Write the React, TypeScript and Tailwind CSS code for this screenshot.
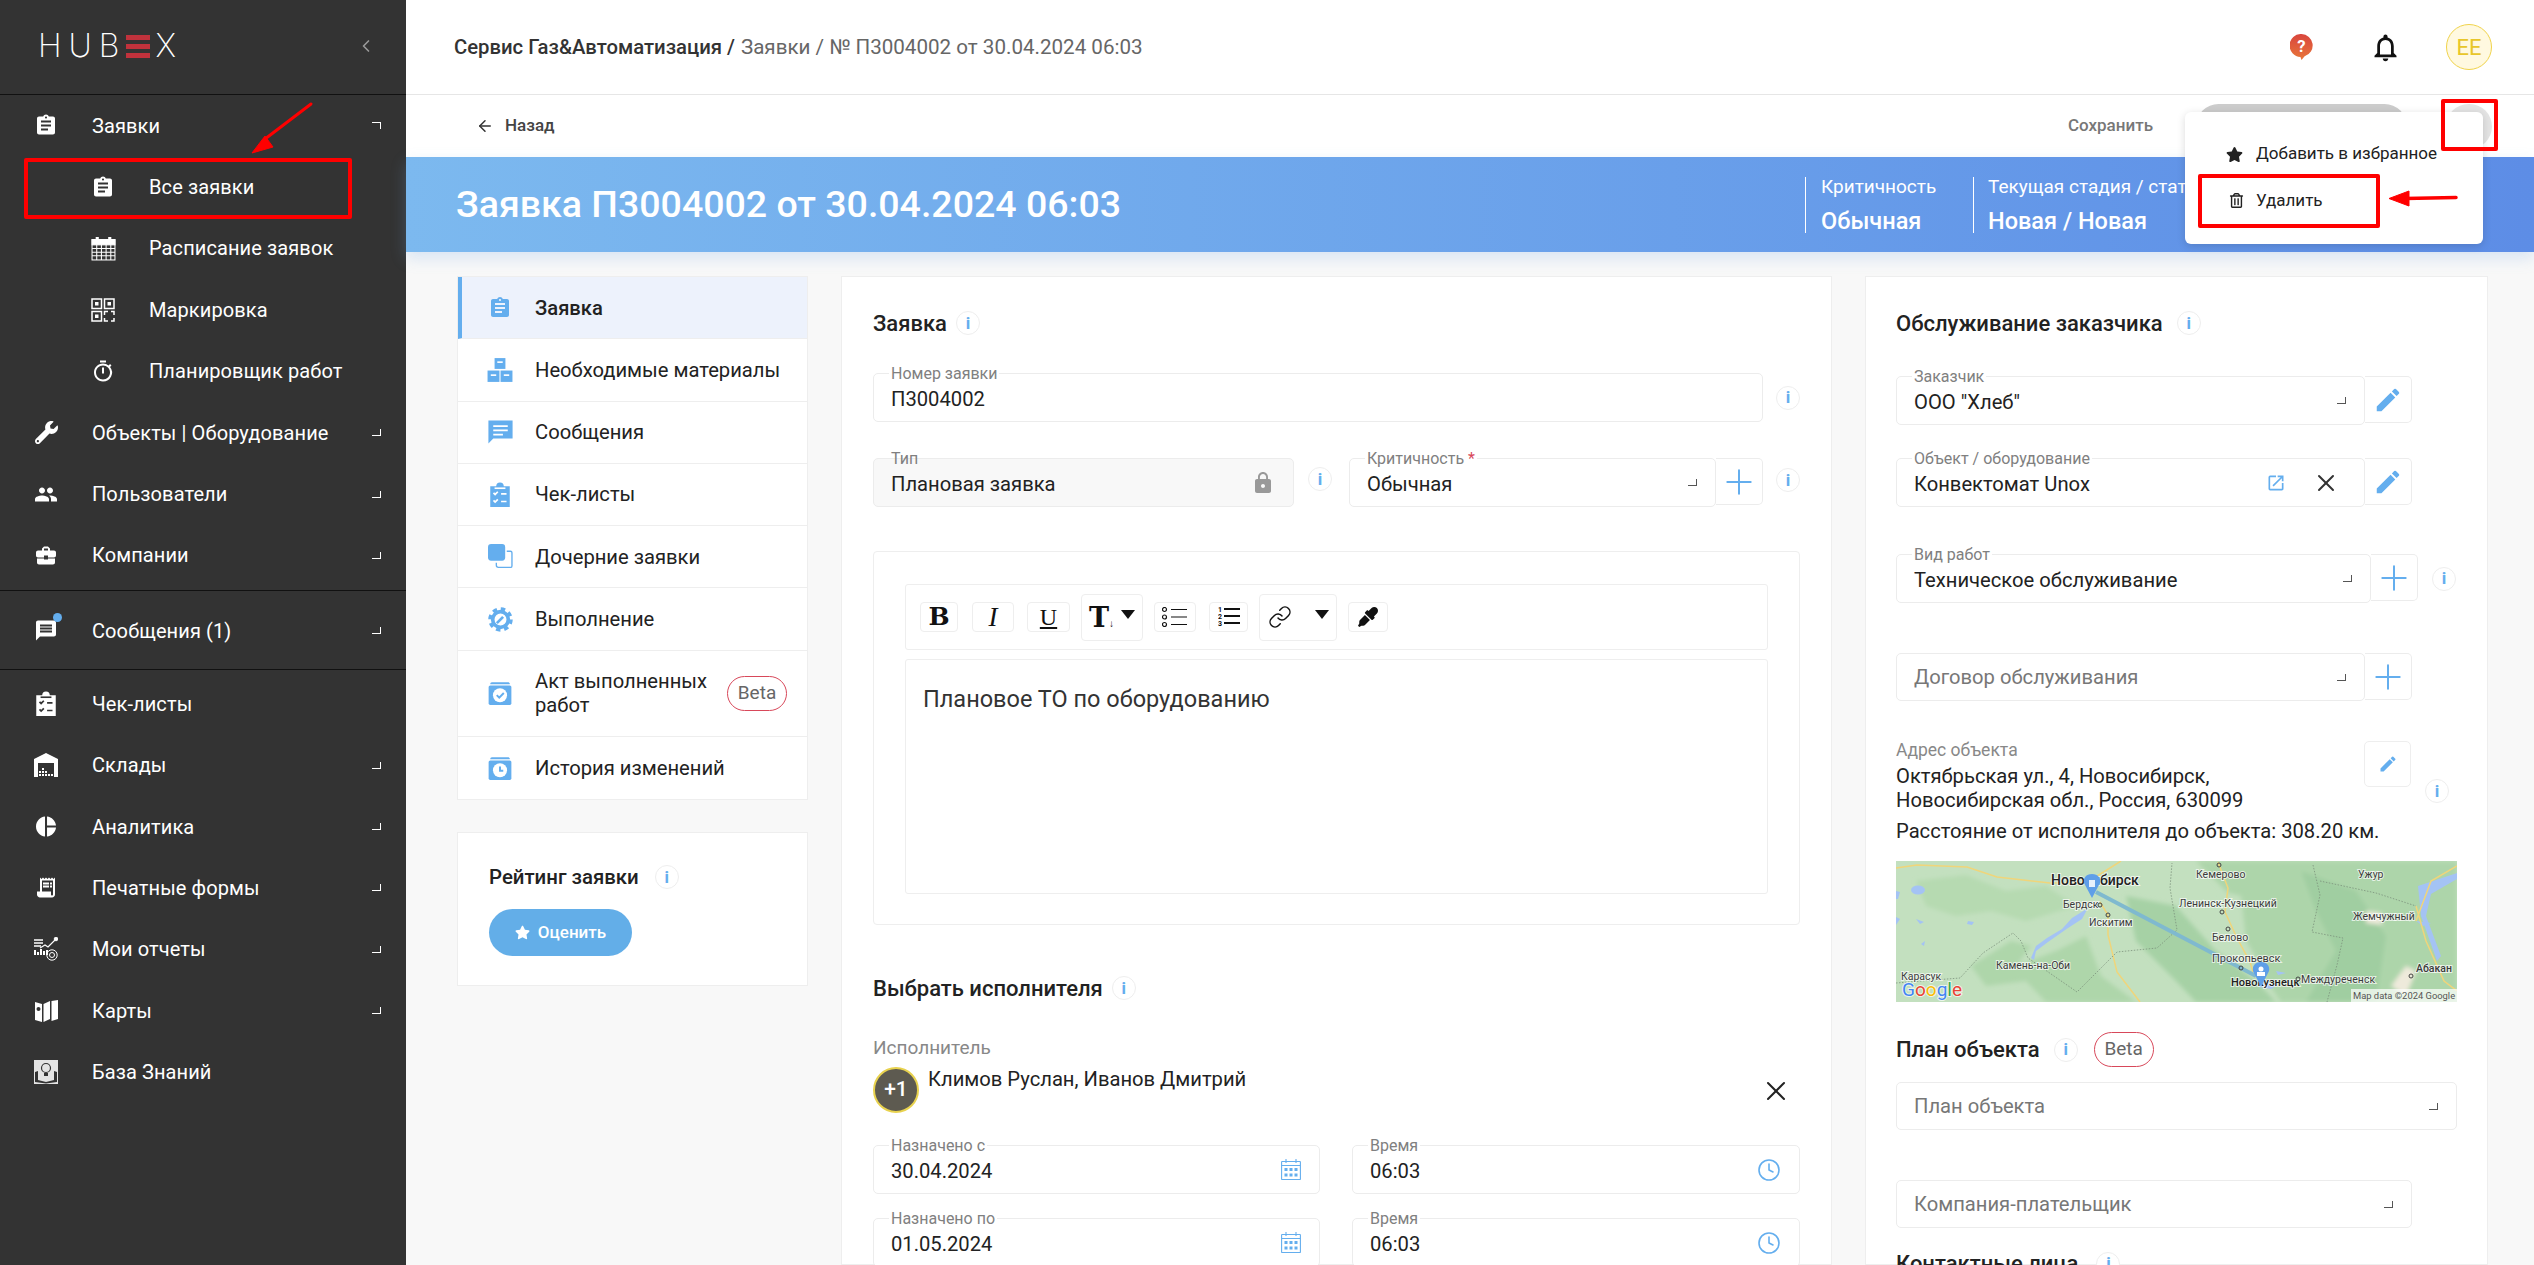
import React from 'react';
import { ArrowLeft, ChevronLeft, Clock, Link as LinkIcon, Plus, X } from 'lucide-react';
import { FaRegTrashAlt, FaStar, FaWrench, FaEyeDropper } from 'react-icons/fa';
import {
    MdAssignment, MdBusinessCenter, MdEdit, MdLock, MdMessage, MdNotificationsNone,
    MdOpenInNew, MdOutlineTimer, MdPeople, MdPieChart, MdReceiptLong,
} from 'react-icons/md';

const Corner = ({ up = false, className = '' }: { up?: boolean; className?: string }) => (
    <span className={`block h-[7px] w-[9px] border-r border-current ${up ? 'border-t' : 'border-b'} ${className}`} />
);

const Info = ({ className = '' }: { className?: string }) => (
    <span className={`flex h-6 w-6 shrink-0 items-center justify-center rounded-full border border-[#eeeeee] bg-white text-[17px] font-bold leading-none text-[#64aeee] ${className}`}>i</span>
);

const Beta = ({ className = '' }: { className?: string }) => (
    <span className={`flex h-[35px] w-[60px] shrink-0 items-center justify-center rounded-full border border-[#d8485a] text-[19px] text-[#666666] ${className}`}>Beta</span>
);

// icons that no package has in this shape
const Clipboard = ({ size = 26, inner = '#333333' }: { size?: number; inner?: string }) => (
    <svg viewBox="0 0 24 24" width={size} height={size} fill="currentColor" className="shrink-0">
        <path d="M3 4h5.5a3.5 3.5 0 0 1 7 0H21v19H3z" />
        <g stroke={inner} strokeWidth="1.6" fill="none">
            <path d="M6 10l1.5 1.5L10 9M6 17l1.5 1.5L10 16M13 11h5M13 18h5" />
        </g>
        <rect x="7" y="5" width="10" height="1.5" fill={inner} />
    </svg>
);

const BoxCalendar = ({ clock = false }: { clock?: boolean }) => (
    <svg viewBox="0 0 24 24" width={26} height={26} className="shrink-0 text-[#64aeee]" fill="currentColor">
        <path d="M3 3.5A1.5 1.5 0 0 1 4.500 2H20l1 1v1H3z" />
        <rect x="1.500" y="5" width="21" height="18" rx="1.500" />
        <circle cx="12" cy="14" r="6.500" fill="#ffffff" />
        {clock
            ? <path d="M12 10.500V14.500H15" stroke="currentColor" strokeWidth="1.800" fill="none" />
            : <path d="M9 14l2.300 2.300L15.500 12" stroke="currentColor" strokeWidth="1.800" fill="none" />}
    </svg>
);

const Boxes = () => (
    <svg viewBox="0 0 24 24" width={26} height={26} className="shrink-0 text-[#64aeee]" fill="currentColor">
        <rect x="7" y="1" width="10" height="10" />
        <rect x="0.500" y="12.500" width="11" height="10.500" />
        <rect x="12.500" y="12.500" width="11" height="10.500" />
        <g fill="#ffffff"><rect x="9.500" y="4" width="5" height="1.500" /><rect x="3.500" y="16" width="5" height="1.500" /><rect x="15.500" y="16" width="5" height="1.500" /></g>
    </svg>
);

const ChildDocs = () => (
    <svg viewBox="0 0 24 24" width={25} height={25} className="shrink-0 text-[#64aeee]" fill="currentColor">
        <rect x="0" y="0" width="16.500" height="16" rx="3" />
        <path d="M18 7h3.500a1.500 1.500 0 0 1 1.500 1.500V21a1.500 1.500 0 0 1-1.500 1.500H10a2 2 0 0 1-2-2V18" fill="none" stroke="currentColor" strokeWidth="1.300" />
    </svg>
);

const GearWrench = () => (
    <svg viewBox="0 0 24 24" width={25} height={25} className="shrink-0 text-[#64aeee]" fill="none" stroke="currentColor">
        <circle cx="12" cy="12" r="10" strokeWidth="3.500" strokeDasharray="4.200 3.650" />
        <circle cx="12" cy="12" r="7.500" strokeWidth="3.500" />
        <path d="M8.500 15.500L14.500 9.500" strokeWidth="2.600" />
    </svg>
);

const Bubble = () => (
    <svg viewBox="0 0 24 24" width={29} height={29} className="shrink-0 text-[#64aeee]" fill="currentColor">
        <path d="M2 2h20v15H6l-4 4z" />
        <path d="M6 6h12v1.500H6zM6 9.500h12V11H6zM6 13h8v1.500H6z" fill="#ffffff" />
    </svg>
);

const GridCalendar = () => (
    <svg viewBox="0 0 24 24" width={25} height={25} fill="none" stroke="currentColor" strokeWidth="1" className="shrink-0">
        <rect x="1" y="3.500" width="22" height="19.500" fill="none" />
        <rect x="1" y="3.500" width="22" height="5" fill="currentColor" />
        <path d="M6 1v5M18 1v5" strokeWidth="3" />
        <path d="M1 12h22M1 15.500h22M1 19h22M5.500 8v15M10 8v15M14.500 8v15M19 8v15" />
    </svg>
);

const DateCalendar = () => (
    <svg viewBox="0 0 20 21" width={20} height={21} fill="none" stroke="#64aeee" strokeWidth="1.100" className="shrink-0">
        <rect x="0.600" y="2.500" width="18.800" height="18" rx="0.500" />
        <path d="M0.600 6.500h18.800M5 0v4M15 0v4" />
        <g fill="#64aeee" stroke="none">
            <rect x="3.500" y="9" width="3" height="3" /><rect x="8.500" y="9" width="3" height="3" /><rect x="13.500" y="9" width="3" height="3" />
            <rect x="3.500" y="14.500" width="3" height="3" /><rect x="8.500" y="14.500" width="3" height="3" /><rect x="13.500" y="14.500" width="3" height="3" />
        </g>
    </svg>
);

const QrIcon = () => (
    <svg viewBox="0 0 24 24" width={24} height={24} fill="none" stroke="currentColor" strokeWidth="1.500" className="shrink-0">
        <rect x="1" y="1" width="9.500" height="9.500" /><rect x="13.500" y="1" width="9.500" height="9.500" /><rect x="1" y="13.500" width="9.500" height="9.500" />
        <g fill="currentColor" stroke="none"><rect x="4" y="4" width="3.500" height="3.500" /><rect x="16.500" y="4" width="3.500" height="3.500" /><rect x="4" y="16.500" width="3.500" height="3.500" /></g>
        <path d="M13.500 17v-3.500H17M20 13.500h3V17M23 20v3h-3M17 23h-3.500v-3" />
    </svg>
);

const Warehouse = () => (
    <svg viewBox="0 0 24 24" width={24} height={24} fill="currentColor" className="shrink-0">
        <path d="M0 6L12 0l12 6v18h-4V10H4v14H0z" />
        <g><rect x="5" y="18" width="2" height="2" /><rect x="8" y="18" width="2" height="2" /><rect x="11" y="18" width="2" height="2" /><rect x="5" y="21" width="2" height="2" /><rect x="8" y="21" width="2" height="2" /><rect x="11" y="21" width="2" height="2" /><rect x="14" y="21" width="2" height="2" /><rect x="17" y="21" width="2" height="2" /><rect x="8" y="15" width="2" height="2" /></g>
    </svg>
);

const Reports = () => (
    <svg viewBox="0 0 24 24" width={24} height={24} fill="none" stroke="currentColor" className="shrink-0">
        <path d="M0 3h9M0 6h9M0 9h7" strokeWidth="1.500" />
        <path d="M1 18v-5M4 18v-3M7 18v-6M10 18v-4M13 18v-5" strokeWidth="2" />
        <path d="M6 11l5-3 3 2 7-7" strokeWidth="1.200" />
        <circle cx="22" cy="2" r="1.800" fill="currentColor" />
        <circle cx="18" cy="18" r="5.200" strokeWidth="1" />
        <circle cx="18" cy="18" r="2.500" strokeWidth="1" />
    </svg>
);

const FoldMap = () => (
    <svg viewBox="0 0 24 24" width={24} height={24} fill="currentColor" className="shrink-0">
        <path d="M1 3l7 2v18l-7-2zM9.500 5L16 2v18l-6.500 3zM17.500 2L24 1v19l-6.500 2z" />
        <circle cx="4.500" cy="10" r="2" fill="#333333" />
    </svg>
);

const BookBulb = () => (
    <svg viewBox="0 0 24 24" width={24} height={24} className="shrink-0">
        <rect width="24" height="24" fill="#e4e4e4" />
        <circle cx="12" cy="8" r="4.500" fill="none" stroke="#333333" strokeWidth="1.200" />
        <path d="M10 13h4v3h-4z" fill="#333333" />
        <path d="M1 12v10l11 1.500L23 22V12l-3-1v9l-8 2-8-2v-9z" fill="#333333" />
    </svg>
);

const HelpBubble = () => (
    <svg viewBox="0 0 22 25" width={23} height={26} className="shrink-0" fontFamily="Roboto, sans-serif">
        <defs>
            <linearGradient id="help" x1="0" y1="0" x2="0" y2="1"><stop offset="0" stopColor="#d9453d" /><stop offset="1" stopColor="#e8773a" /></linearGradient>
        </defs>
        <path d="M11 0a11 11 0 0 1 3 21.500L11 25l-1-3A11 11 0 0 1 11 0z" fill="url(#help)" />
        <text x="11" y="17" textAnchor="middle" fontSize="16" fontWeight="700" fill="#ffffff">?</text>
    </svg>
);

const Row = ({ icon, label, sub = false, open, caret = false }: { icon: React.ReactNode; label: string; sub?: boolean; open?: boolean; caret?: boolean }) => (
    <div className={`flex h-[61.4px] items-center text-white ${sub ? 'pl-[91px]' : 'pl-[34px]'} pr-[25px]`}>
        <span className="flex w-6 shrink-0 justify-center text-[29px]">{icon}</span>
        <span className="ml-[34px] flex-1 text-[20px] font-normal tracking-[0.1px]">{label}</span>
        {caret && <Corner up={open} />}
    </div>
);

const Field = ({ label, value, right, className = '', box, muted = false, req = false }: { label?: string; value: string; right?: React.ReactNode; className?: string; box?: React.ReactNode; muted?: boolean; req?: boolean }) => (
    <div className={`flex ${className}`}>
        <div className={`relative flex h-[49px] min-w-0 flex-1 items-center rounded-[5px] border border-[#ececec] pl-[17px] pr-[18px] ${muted ? 'bg-[#f8f8f8]' : 'bg-white'}`}>
            {label && (
                <span className={`absolute -top-[9px] left-[15px] px-[2px] text-[16px] leading-[18px] text-[#808080] ${muted ? '' : 'bg-white'}`}>
                    {label}{req && <span className="text-[#d8485a]"> *</span>}
                </span>
            )}
            <span className="flex-1 pt-[3px] text-[20.2px] text-[#222222]">{value}</span>
            {right}
        </div>
        {box && <span className="flex h-[47px] w-[47px] shrink-0 items-center justify-center rounded-r-[5px] border border-l-0 border-[#ececec] text-[#64aeee]">{box}</span>}
    </div>
);

const Placeholder = ({ text, box, className = '' }: { text: string; box?: React.ReactNode; className?: string }) => (
    <div className={`flex ${className}`}>
        <div className="flex h-[48px] min-w-0 flex-1 items-center rounded-[5px] border border-[#ececec] bg-white pl-[17px] pr-[18px]">
            <span className="flex-1 text-[20.2px] text-[#777777]">{text}</span>
            <Corner className="text-[#555555]" />
        </div>
        {box && <span className="flex h-[47px] w-[47px] shrink-0 items-center justify-center rounded-r-[5px] border border-l-0 border-[#ececec] text-[#64aeee]">{box}</span>}
    </div>
);

const navItems: [React.ReactNode, string][] = [
    [<MdAssignment className="text-[28px]" />, 'Заявка'],
    [<Boxes />, 'Необходимые материалы'],
    [<Bubble />, 'Сообщения'],
    [<span className="text-[#64aeee]"><Clipboard inner="#ffffff" /></span>, 'Чек-листы'],
    [<ChildDocs />, 'Дочерние заявки'],
    [<GearWrench />, 'Выполнение'],
];

const ToolBtn = ({ children, className = '' }: { children: React.ReactNode; className?: string }) => (
    <span className={`flex items-center justify-center rounded-[4px] border border-[#eeeeee] bg-white text-[#111111] ${className}`}>{children}</span>
);

const label = { paintOrder: 'stroke' } as React.CSSProperties;

const MapView = () => (
    <svg viewBox="0 0 561 141" className="block h-[141px] w-[561px]" fontFamily="Roboto, sans-serif" fontSize="10.500" fill="#3c3c3c">
        <defs>
            <filter id="soft"><feGaussianBlur stdDeviation="2" /></filter>
        </defs>
        <rect width="561" height="141" fill="#c3e0bf" />
        <g filter="url(#soft)">
            <path d="M20 20 L70 14 L110 30 L150 25 L180 45 L130 60 L95 50 L60 55 L30 45 Z" fill="#b6dab1" />
            <path d="M75 105 L115 80 L135 85 L120 105 L160 90 L190 75 L205 115 L240 141 H150 L130 120 L90 125 Z" fill="#aed6aa" />
            <path d="M230 35 L280 45 L320 90 L360 120 L380 141 H300 L280 120 L240 80 Z" fill="#a6d1a5" />
            <path d="M300 0 H561 V141 H385 L350 90 L340 40 Z" fill="#add5aa" />
            <path d="M405 10 L460 30 L490 75 L480 141 H410 L440 90 L420 50 Z" fill="#a0cea1" />
            <path d="M325 30 L345 35 L350 80 L365 105 L345 95 L330 60 Z" fill="#c3e0bf" />
            <path d="M470 50 L485 52 L486 64 L470 62 Z" fill="#eeeadb" />
            <path d="M495 125 L510 105 L520 110 L510 135 Z" fill="#eeeadb" />
        </g>
        <g fill="#a4c3f4">
            <ellipse cx="22" cy="29" rx="7" ry="4.500" />
            <path d="M135 97 L140 85 L151 77 L166 68 L176 57 L192 47 L186 58 L172 67 L152 81 L140 90 L138 99 Z" />
            <path d="M0 30 l4 1 l-2 7 l-2 0 Z M0 56 l4 2 l-4 6 Z M20 58 l8 3 l-4 2 Z M72 60 l6 1 l-2 3 l-5 -1 Z M25 83 l4 -3 l-1 5 Z" />
            <path d="M450 5 L470 0 M520 60 l15 2 l-8 3 Z" />
            <path d="M522 25 L561 12 V18 L535 33 L530 55 L545 95 L541 100 L525 55 Z" />
            <path d="M363 120 l18 4 l-6 4 l-12 -2 Z M380 110 l10 2 l-8 2 Z" />
        </g>
        <g stroke="#f0d57a" strokeWidth="1.500" fill="none">
            <path d="M0 7 L21 4 L71 6 L101 16 L154 22 L190 22 L225 0" />
            <path d="M204 41 L212 54 L212 74 L221 111 L244 141" />
            <path d="M322 1 L332 27 L329 51 L341 77 L354 101 L357 111" />
            <path d="M520 45 L530 80 L548 120 L561 130 M520 60 L535 20 L561 5" />
        </g>
        <g stroke="#7b917b" strokeWidth="0.800" strokeDasharray="1.500 1.500" fill="none">
            <path d="M0 122 L64 117 L87 92 L117 72 L125 80 L132 97 L181 131 L221 91 L261 87 L281 69 L274 27 L276 2" />
            <path d="M417 4 L424 34 L416 71 L447 77 L441 104 L431 141 M424 20 L480 32 L520 45" />
        </g>
        <path d="M200 31 L360 115" stroke="#7fb9cf" strokeWidth="4" />
        <g stroke="#ffffff" strokeWidth="2" strokeOpacity="0.7" style={label}>
            <text x="155" y="24" fontSize="14" fill="#222222" fontWeight="500">Новосибирск</text>
            <text x="167" y="47">Бердск</text>
            <text x="193" y="65">Искитим</text>
            <text x="300" y="17">Кемерово</text>
            <text x="283" y="46">Ленинск-Кузнецкий</text>
            <text x="316" y="80">Белово</text>
            <text x="316" y="101" fontSize="11">Прокопьевск</text>
            <text x="335" y="125" fontSize="11" fontWeight="500" fill="#222222">Новокузнецк</text>
            <text x="405" y="122">Междуреченск</text>
            <text x="462" y="17">Ужур</text>
            <text x="457" y="59">Жемчужный</text>
            <text x="520" y="111" fontWeight="500">Абакан</text>
            <text x="100" y="108">Камень-на-Оби</text>
            <text x="5" y="119">Карасук</text>
        </g>
        <g fill="none" stroke="#444444" strokeWidth="1">
            <circle cx="204" cy="44" r="2" /><circle cx="212" cy="54" r="2" /><circle cx="323" cy="4" r="2" /><circle cx="326" cy="51" r="2" /><circle cx="332" cy="68" r="2" /><circle cx="345" cy="107" r="2" /><circle cx="402" cy="118" r="2" /><circle cx="515" cy="115" r="2" />
        </g>
        <text x="6" y="135" fontSize="19" fontWeight="400" stroke="#ffffff" strokeWidth="2" strokeOpacity="0.7" style={label}>
            <tspan fill="#4285f4">G</tspan><tspan fill="#ea4335">o</tspan><tspan fill="#fbbc05">o</tspan><tspan fill="#4285f4">g</tspan><tspan fill="#34a853">l</tspan><tspan fill="#ea4335">e</tspan>
        </text>
        <rect x="455" y="128" width="106" height="13" fill="#ffffff" opacity="0.7" />
        <text x="457" y="138" fontSize="9.400" fill="#555555">Map data ©2024 Google</text>
        <path d="M196 13 c-6 0 -9 4 -8 9 l8 15 l8 -15 c1 -5 -2 -9 -8 -9 Z" fill="#5f9fe8" />
        <rect x="193" y="19" width="6" height="7" fill="#ffffff" opacity="0.85" />
        <path d="M365 101 c-6 0 -9 4 -8 9 l8 16 l8 -16 c1 -5 -2 -9 -8 -9 Z" fill="#5f9fe8" />
        <circle cx="365" cy="108" r="2.500" fill="#ffffff" /><rect x="361" y="111" width="8" height="4" fill="#ffffff" />
    </svg>
);

export default function App() {
    return (
        <div className="flex h-screen w-full overflow-hidden bg-[#f8f8f8] font-['Roboto',sans-serif] text-[#222222]">
            <aside className="w-[406px] shrink-0 bg-[#333333]">
                <div className="flex h-[95px] items-center border-b border-[#111111] pl-[38px] pr-[30px] pb-[2px]">
                    <span className="flex flex-1 items-center font-['Inter',sans-serif] text-[32px] font-extralight leading-none tracking-[7px] text-white">
                        HUB
                        <span className="mr-[5px] flex h-[23px] w-[24px] flex-col justify-between">
                            <span className="h-[5px] bg-[#c0323c]" />
                            <span className="h-[5px] bg-[#c0323c]" />
                            <span className="h-[5px] bg-[#c0323c]" />
                        </span>
                        X
                    </span>
                    <ChevronLeft size={20} className="text-[#999999]" />
                </div>
                <Row icon={<MdAssignment />} label="Заявки" open caret />
                <Row sub icon={<MdAssignment />} label="Все заявки" />
                <Row sub icon={<GridCalendar />} label="Расписание заявок" />
                <Row sub icon={<QrIcon />} label="Маркировка" />
                <Row sub icon={<MdOutlineTimer />} label="Планировщик работ" />
                <Row icon={<FaWrench className="text-[23px]" />} label="Объекты | Оборудование" caret />
                <Row icon={<MdPeople />} label="Пользователи" caret />
                <Row icon={<MdBusinessCenter />} label="Компании" caret />
                <div className="mt-[4px] h-[80px] border-y border-[#111111] pt-[9px]">
                    <div className="relative">
                        <Row icon={<MdMessage />} label="Сообщения (1)" caret />
                        <span className="absolute left-[53px] top-[13px] h-[9px] w-[9px] rounded-full bg-[#64aeee]" />
                    </div>
                </div>
                <div className="pt-[3px]">
                    <Row icon={<Clipboard inner="#333333" />} label="Чек-листы" />
                    <Row icon={<Warehouse />} label="Склады" caret />
                    <Row icon={<MdPieChart />} label="Аналитика" caret />
                    <Row icon={<MdReceiptLong />} label="Печатные формы" caret />
                    <Row icon={<Reports />} label="Мои отчеты" caret />
                    <Row icon={<FoldMap />} label="Карты" caret />
                    <Row icon={<BookBulb />} label="База Знаний" />
                </div>
            </aside>

            <div className="flex min-w-0 flex-1 flex-col">
                <header className="flex h-[95px] shrink-0 items-center border-b border-[#e6e6e6] bg-white pl-[48px]">
                    <span className="text-[20.3px] font-medium text-[#333333]">Сервис Газ&amp;Автоматизация /</span>
                    <span className="ml-[6px] flex-1 text-[20.6px] text-[#666666]">Заявки / № П3004002 от 30.04.2024 06:03</span>
                    <span className="mr-[56px]"><HelpBubble /></span>
                    <MdNotificationsNone className="mr-[44px] text-[33px] text-[#111111]" />
                    <span className="mr-[42px] flex h-[46px] w-[46px] items-center justify-center rounded-full border border-[#f0d34a] bg-[#fff9e0] text-[22px] text-[#e8c62a]">EE</span>
                </header>

                <div className="flex h-[62px] shrink-0 items-center bg-white pl-[70px]">
                    <ArrowLeft size={18} className="text-[#333333]" />
                    <span className="ml-[11px] flex-1 text-[17px] font-medium text-[#444444]">Назад</span>
                    <span className="mr-[43px] text-[17px] font-medium text-[#777777]">Сохранить</span>
                    <span className="mr-[39px] h-[45px] w-[211px] rounded-full bg-[#cccccc]" />
                    <span className="mr-[42px] h-[45px] w-[46px] rounded-full bg-[#e4e4e4]" />
                </div>

                <div className="flex h-[95px] shrink-0 items-center bg-gradient-to-r from-[#7cb9ef] to-[#5d8de6] pl-[50px] text-white shadow-[0_6px_14px_rgba(120,170,230,0.25)]">
                    <span className="flex-1 text-[37.500px] font-medium">Заявка П3004002 от 30.04.2024 06:03</span>
                    <div className="flex h-[56px] w-[168px] flex-col justify-between border-l border-white pl-[15px]">
                        <span className="text-[19px] leading-[20px]">Критичность</span>
                        <span className="text-[23.500px] font-medium leading-[24px]">Обычная</span>
                    </div>
                    <div className="flex h-[56px] w-[561px] flex-col justify-between border-l border-white pl-[14px]">
                        <span className="text-[19px] leading-[20px]">Текущая стадия / статус</span>
                        <span className="text-[23.500px] font-medium leading-[24px]">Новая / Новая</span>
                    </div>
                </div>

                <div className="flex min-h-0 flex-1 gap-[33px] overflow-hidden pl-[51px] pt-[24px]">
                    <div className="w-[351px] shrink-0">
                        <div className="border border-[#eeeeee] bg-white">
                            {navItems.map(([icon, text], i) => (
                                <div key={text} className={`flex h-[62.3px] items-center border-b border-[#eeeeee] text-[20.2px] ${i === 0 ? 'border-l-4 border-l-[#64aeee] bg-[#edf2fc] pl-[26px] font-medium' : 'pl-[30px]'}`}>
                                    <span className="flex w-6 shrink-0 justify-center text-[#64aeee]">{icon}</span>
                                    <span className="ml-[23px]">{text}</span>
                                </div>
                            ))}
                            <div className="flex h-[86px] items-center border-b border-[#eeeeee] pl-[29px] text-[20.2px]">
                                <BoxCalendar />
                                <span className="ml-[22px] w-[192px] leading-[24px]">Акт выполненных работ</span>
                                <Beta />
                            </div>
                            <div className="flex h-[62px] items-center pl-[29px] text-[20.2px]">
                                <BoxCalendar clock />
                                <span className="ml-[22px]">История изменений</span>
                            </div>
                        </div>
                        <div className="mt-[32px] h-[154px] border border-[#eeeeee] bg-white pl-[31px] pt-[29px]">
                            <div className="flex items-center gap-[16px] text-[20.4px] font-medium">
                                Рейтинг заявки <Info />
                            </div>
                            <span className="mt-[17px] flex h-[47px] w-[143px] items-center justify-center gap-[8px] rounded-full bg-[#63aee8] text-[17px] font-medium text-white">
                                <FaStar className="text-[15px]" /> Оценить
                            </span>
                        </div>
                    </div>

                    <div className="w-[991px] shrink-0 border border-[#eeeeee] bg-white pl-[31px] pr-[31px] pt-[34px]">
                        <div className="flex h-[24px] items-center gap-[9px] text-[22px] font-medium">Заявка <Info /></div>
                        <div className="mt-[38px] flex items-center gap-[13px]">
                            <Field label="Номер заявки" value="П3004002" className="w-[890px]" />
                            <Info />
                        </div>
                        <div className="mt-[36px] flex items-start">
                            <Field muted label="Тип" value="Плановая заявка" className="w-[421px]" right={<MdLock className="text-[24px] text-[#999999]" />} />
                            <Info className="ml-[14px] mt-[9px]" />
                            <Field req label="Критичность" value="Обычная" className="ml-[17px] w-[414px]" right={<Corner className="text-[#555555]" />} box={<Plus size={40} strokeWidth={1.2} />} />
                            <Info className="ml-[13px] mt-[10px]" />
                        </div>
                        <div className="mt-[44px] h-[374px] rounded-[4px] border border-[#eeeeee] px-[31px] pt-[32px]">
                            <div className="flex h-[66px] items-center rounded-[3px] border border-[#eeeeee] pl-[14px]">
                                <ToolBtn className="h-[30px] w-[38px] font-['DejaVu_Serif',serif] text-[25px] font-bold">B</ToolBtn>
                                <ToolBtn className="ml-[14px] h-[30px] w-[42px] font-['Liberation_Serif',serif] text-[27px] italic">I</ToolBtn>
                                <ToolBtn className="ml-[13px] h-[30px] w-[43px] font-['Liberation_Serif',serif] text-[24px] underline">U</ToolBtn>
                                <ToolBtn className="ml-[11px] h-[47px] w-[62px] font-['DejaVu_Serif',serif] text-[27px] font-bold leading-none">
                                    T<span className="mt-[12px] font-sans text-[10px]">↓</span>
                                    <span className="ml-[7px] mb-[6px] h-0 w-0 border-x-[7px] border-t-[9px] border-x-transparent border-t-[#111111]" />
                                </ToolBtn>
                                <ToolBtn className="ml-[11px] h-[30px] w-[42px]">
                                    <svg viewBox="0 0 26 20" width={26} height={20} fill="none" stroke="#111111" strokeWidth="1.200">
                                        <circle cx="2.500" cy="2.500" r="2" /><circle cx="2.500" cy="10" r="2" /><circle cx="2.500" cy="17.500" r="2" />
                                        <path d="M9 2.500h16M9 10h16M9 17.500h16" />
                                    </svg>
                                </ToolBtn>
                                <ToolBtn className="ml-[13px] h-[30px] w-[39px]">
                                    <svg viewBox="0 0 22 22" width={22} height={22} fill="#111111" fontSize="7" fontWeight="700" fontFamily="Roboto, sans-serif">
                                        <text x="0" y="6">1</text><text x="0" y="13">2</text><text x="0" y="20">3</text>
                                        <rect x="6" y="2" width="16" height="2" /><rect x="6" y="9" width="16" height="2" /><rect x="6" y="16" width="16" height="2" />
                                    </svg>
                                </ToolBtn>
                                <ToolBtn className="ml-[11px] h-[47px] w-[78px] gap-[23px]">
                                    <LinkIcon size={24} strokeWidth={1.500} />
                                    <span className="mb-[6px] h-0 w-0 border-x-[7px] border-t-[9px] border-x-transparent border-t-[#111111]" />
                                </ToolBtn>
                                <ToolBtn className="ml-[11px] h-[30px] w-[40px] text-[20px]"><FaEyeDropper /></ToolBtn>
                            </div>
                            <div className="mt-[9px] h-[235px] rounded-[3px] border border-[#eeeeee] pl-[17px] pt-[25px] text-[23.500px] leading-[28px] text-[#333333]">Плановое ТО по оборудованию</div>
                        </div>
                        <div className="mt-[51px] flex h-[24px] items-center gap-[9px] text-[22px] font-medium">Выбрать исполнителя <Info /></div>
                        <div className="mt-[38px] text-[19px] leading-[20px] text-[#888888]">Исполнитель</div>
                        <div className="mt-[9px] flex h-[46px] items-start">
                            <span className="flex h-[46px] w-[46px] items-center justify-center rounded-full border-2 border-[#e8d24e] bg-[#5d5a50] text-[21px] font-medium text-white">+1</span>
                            <span className="ml-[9px] flex-1 text-[20.2px] leading-[24px]">Климов Руслан, Иванов Дмитрий</span>
                            <X size={32} strokeWidth={1.500} className="mr-[8px] mt-[8px] text-[#222222]" />
                        </div>
                        <div className="mt-[32px] grid grid-cols-[447px_448px] gap-x-[32px] gap-y-[24px]">
                            <Field label="Назначено с" value="30.04.2024" right={<DateCalendar />} />
                            <Field label="Время" value="06:03" right={<Clock size={24} strokeWidth={1.600} className="text-[#64aeee]" />} />
                            <Field label="Назначено по" value="01.05.2024" right={<DateCalendar />} />
                            <Field label="Время" value="06:03" right={<Clock size={24} strokeWidth={1.600} className="text-[#64aeee]" />} />
                        </div>
                    </div>

                    <div className="w-[623px] shrink-0 border border-[#eeeeee] bg-white pl-[30px] pt-[34px]">
                        <div className="flex h-[24px] items-center gap-[14px] text-[22px] font-medium">Обслуживание заказчика <Info /></div>
                        <Field label="Заказчик" value={'ООО "Хлеб"'} className="mt-[41px] w-[516px]" right={<Corner className="text-[#555555]" />} box={<MdEdit className="text-[30px]" />} />
                        <Field label="Объект / оборудование" value="Конвектомат Unox" className="mt-[33px] w-[516px]" right={
                            <span className="flex items-center gap-[26px]">
                                <MdOpenInNew className="text-[20px] text-[#64aeee]" />
                                <X size={28} strokeWidth={1.700} className="mr-[6px] text-[#333333]" />
                            </span>
                        } box={<MdEdit className="text-[30px]" />} />
                        <div className="mt-[47px] flex items-center">
                            <Field label="Вид работ" value="Техническое обслуживание" className="w-[522px]" right={<Corner className="text-[#555555]" />} box={<Plus size={40} strokeWidth={1.2} />} />
                            <Info className="ml-[14px]" />
                        </div>
                        <Placeholder text="Договор обслуживания" className="mt-[50px] w-[516px]" box={<Plus size={40} strokeWidth={1.2} />} />
                        <div className="mt-[40px] flex">
                            <div className="w-[468px]">
                                <div className="text-[17.500px] leading-[18px] text-[#888888]">Адрес объекта</div>
                                <div className="mt-[5px] text-[20.200px] leading-[24px]">Октябрьская ул., 4, Новосибирск,<br />Новосибирская обл., Россия, 630099</div>
                            </div>
                            <span className="flex h-[46px] w-[47px] items-center justify-center rounded-[5px] border border-[#eeeeee] text-[20px] text-[#64aeee]"><MdEdit /></span>
                            <Info className="ml-[14px] mt-[38px]" />
                        </div>
                        <div className="mt-[7px] text-[20.200px] leading-[24px]">Расстояние от исполнителя до объекта: 308.20 км.</div>
                        <div className="mt-[18px]"><MapView /></div>
                        <div className="mt-[30px] flex h-[35px] items-center">
                            <span className="text-[22px] font-medium">План объекта</span>
                            <Info className="ml-[14px]" />
                            <Beta className="ml-[16px]" />
                        </div>
                        <Placeholder text="План объекта" className="mt-[15px] w-[561px]" />
                        <Placeholder text="Компания-плательщик" className="mt-[50px] w-[516px]" />
                        <div className="mt-[19px] flex items-center gap-[18px] text-[22px] font-medium">Контактные лица <Info /></div>
                    </div>
                </div>
            </div>

            <div className="absolute left-[2185px] top-[112px] z-10 h-[132px] w-[298px] rounded-[6px] bg-white shadow-[0_2px_8px_rgba(0,0,0,0.15)]">
                <div className="flex h-[84px] items-center pl-[41px] text-[17px] text-[#222222]">
                    <FaStar className="text-[17px]" /><span className="ml-[13px]">Добавить в избранное</span>
                </div>
                <div className="-mt-[8px] flex items-center pl-[44px] text-[17px] text-[#222222]">
                    <FaRegTrashAlt className="text-[15px]" /><span className="ml-[12px]">Удалить</span>
                </div>
            </div>
            <span className="absolute left-[24px] top-[158px] z-20 h-[61px] w-[328px] rounded-[2px] border-[4px] border-[#ff0000]" />
            <span className="absolute left-[2198px] top-[174px] z-20 h-[54px] w-[182px] rounded-[2px] border-[4px] border-[#ff0000]" />
            <span className="absolute left-[2441px] top-[99px] z-20 h-[52px] w-[57px] rounded-[2px] border-[4px] border-[#ff0000]" />
            <svg className="absolute left-0 top-0 z-20 h-[260px] w-[2534px]" fill="#ff0000" stroke="#ff0000">
                <path d="M311 104 L265 139" strokeWidth="3" strokeLinecap="round" />
                <path d="M252 153 L265 136 L273 147 Z" />
                <path d="M2456 197.500 L2405 198.500" strokeWidth="3.500" strokeLinecap="round" />
                <path d="M2389 198.500 L2409 191 L2409 206 Z" />
            </svg>
        </div>
    );
}
